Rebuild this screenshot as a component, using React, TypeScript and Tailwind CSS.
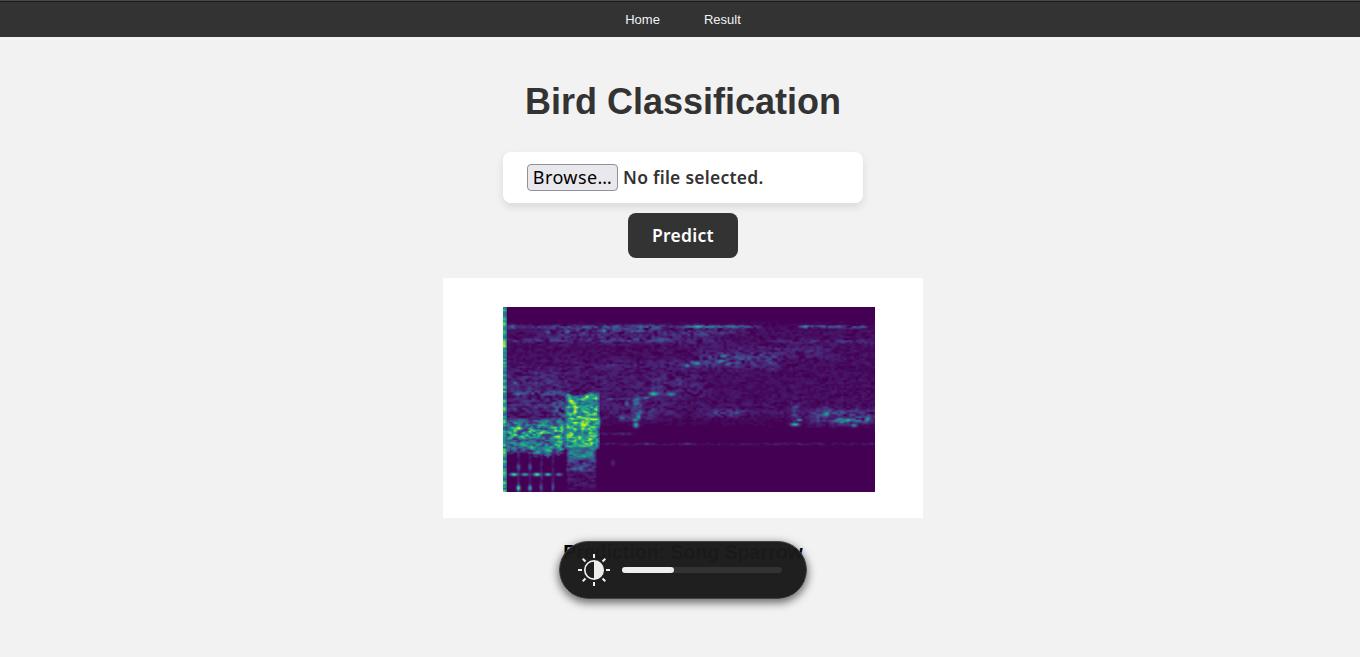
import React from "react";

const W = 372;
const H = 185;

const VIRIDIS: number[][] = [
  [68, 1, 84], [72, 26, 108], [71, 47, 125], [65, 68, 135], [57, 86, 140], [49, 104, 142],
  [42, 120, 142], [35, 136, 142], [31, 152, 139], [34, 168, 132], [53, 183, 121],
  [84, 197, 104], [122, 209, 81], [165, 219, 54], [210, 226, 27], [253, 231, 37],
];
const LEVELS = 46;

function levelColor(level: number): string {
  const t = (level / (LEVELS - 1)) * (VIRIDIS.length - 1);
  const i = Math.min(VIRIDIS.length - 2, Math.floor(t));
  const f = t - i;
  const c = VIRIDIS[i].map((v, k) => Math.round(v + (VIRIDIS[i + 1][k] - v) * f));
  return `rgb(${c.join(",")})`;
}

function hash(x: number, y: number, seed: number): number {
  let n = Math.imul(x, 374761393) ^ Math.imul(y, 668265263) ^ Math.imul(seed, 1274126177);
  n = Math.imul(n ^ (n >>> 13), 1103515245);
  n = Math.imul(n ^ (n >>> 15), 2246822519);
  return ((n ^ (n >>> 16)) >>> 0) / 4294967296;
}

function noise(x: number, y: number, sx: number, sy: number, seed: number): number {
  const gx = x / sx;
  const gy = y / sy;
  const x0 = Math.floor(gx);
  const y0 = Math.floor(gy);
  const fx = gx - x0;
  const fy = gy - y0;
  const top = hash(x0, y0, seed) * (1 - fx) + hash(x0 + 1, y0, seed) * fx;
  const bot = hash(x0, y0 + 1, seed) * (1 - fx) + hash(x0 + 1, y0 + 1, seed) * fx;
  return top * (1 - fy) + bot * fy;
}

function edge(v: number, a: number, b: number, soft: number): number {
  const s = Math.min((v - a) / soft + 0.5, (b - v) / soft + 0.5);
  return Math.max(0, Math.min(1, s));
}

// [x0, x1, y0, y1, strength, softX, softY]
const HAZE: number[][] = [
  [0, 372, 18, 108, 0.065, 2, 12],
  [0, 190, 60, 108, 0.05, 50, 20],
  [0, 60, 66, 112, 0.1, 20, 14],
  [0, 210, 18.5, 21, 0.25, 20, 3],
  [60, 160, 18, 26, 0.13, 15, 4],
  [40, 220, 21, 36, 0.11, 30, 6],
  [90, 165, 31, 35, 0.15, 20, 3],
  [0, 60, 32, 35, 0.12, 20, 3],
  [190, 256, 18.5, 21, 0.38, 10, 2],
  [298, 362, 18.5, 21, 0.46, 10, 2],
  [180, 240, 18, 28, 0.1, 15, 5],
  [270, 372, 33, 36, 0.12, 15, 3],
  [196, 278, 43, 60, 0.2, 22, 12],
  [270, 330, 40, 50, 0.1, 30, 9],
  [90, 200, 55, 62, 0.1, 50, 6],
  [0, 60, 85, 88, 0.24, 15, 3],
  [145, 200, 70, 88, 0.08, 20, 8],
  [308, 372, 102, 118, 0.2, 14, 8],
  [330, 360, 111, 115, 0.24, 8, 3],
  [208, 238, 103, 109, 0.26, 10, 5],
  [118, 150, 102, 114, 0.12, 12, 6],
  [50, 62, 95, 135, 0.3, 5, 6],
  [97, 130, 125.5, 128, 0.14, 6, 2],
  [100, 372, 136, 138, 0.1, 10, 2],
  [64, 93, 152, 164, 0.26, 3, 3],
  [64, 93, 160, 182, 0.1, 3, 6],
  [130, 138, 90, 112, 0.22, 4, 6],
  [98, 132, 91, 93, 0.12, 8, 2],
  [289, 296, 94, 114, 0.17, 4, 6],
];

// [x, y, radiusX, radiusY, strength]
const SPOTS: number[][] = [
  [11, 167.5, 3.4, 1.5, 0.8], [22, 167.5, 3.2, 1.4, 0.6], [34, 167.5, 3.4, 1.6, 0.85],
  [45, 167.5, 3, 1.4, 0.7], [56, 167.5, 2.8, 1.4, 0.45],
  [15.5, 181, 1.8, 2.6, 0.75], [27, 181, 1.8, 2.4, 0.55], [38, 180, 1.5, 3, 0.22], [50, 180, 1.5, 3, 0.2],
  [15.5, 160, 1.8, 3, 0.2], [27, 160, 1.8, 3, 0.2],
  [150, 87, 3.2, 2, 0.6], [155, 86.5, 3, 1.5, 0.25], [168, 87.5, 4.5, 1.6, 0.38], [143, 91, 3, 1.2, 0.3],
  [124, 96, 2, 3, 0.24], [133, 97, 3, 2, 0.24], [133, 92, 3, 1.4, 0.2],
  [133, 118, 2.5, 2.4, 0.62], [136, 110, 2.2, 2.2, 0.38], [132, 113, 2.4, 1.6, 0.38], [119, 111, 3, 2, 0.25],
  [292, 117.5, 3.8, 1.6, 0.64], [296.5, 113, 2.5, 1.3, 0.5],
  [324, 106.5, 3, 2, 0.32], [321, 108, 2, 1.5, 0.2], [346, 113.2, 5, 1.3, 0.3], [339, 115, 2.5, 1.4, 0.26],
  [351, 118.5, 2.5, 1.6, 0.38], [364.5, 112.5, 2.4, 2.3, 0.38],
  [194, 56.5, 3.6, 1.7, 0.42], [189, 55, 2, 1.4, 0.25], [218, 54, 3, 1.7, 0.32],
  [225, 57.5, 3, 1.5, 0.32], [184, 58.5, 2, 1.6, 0.28], [221, 49, 3, 1.2, 0.25], [207, 50, 2, 1.5, 0.22],
  [230, 19.5, 3, 1.5, 0.28], [192, 19.5, 3, 1.5, 0.12], [302, 19.5, 3, 1.5, 0.12],
  [101, 23, 2, 2, 0.35], [10, 20, 3, 2, 0.25], [65, 25, 2, 1.6, 0.25], [45, 25, 2, 1.6, 0.2],
  [12, 76, 2, 1.5, 0.3], [15, 87, 2, 1.5, 0.25], [185, 59, 2, 1.5, 0.1], [110, 156, 1.8, 3, 0.1],
  [144, 137, 3, 1.2, 0.1], [184, 137, 4, 1.2, 0.1], [96, 115, 1.6, 4, 0.42],
];

function intensity(x: number, y: number): number {
  if (x < 4) {
    const n = noise(0, y, 3, 1.8, 9);
    const base = 0.25 + n * 0.58 + (y > 28 && y < 45 ? 0.15 : 0);
    return Math.min(1, base * (x < 2 ? 1 : x < 3 ? 0.85 : 0.6));
  }
  const fine = noise(x, y, 3, 2, 1) * 0.6 + noise(x, y, 6, 2, 2) * 0.4;
  const grain = Math.max(0, (fine - 0.22) * 1.7);
  let v = 0;
  for (const [x0, x1, y0, y1, s, sx, sy] of HAZE) {
    const w = edge(x, x0, x1, sx) * edge(y, y0, y1, sy);
    if (w > 0) v += w * s * grain;
  }
  v += 0.04 * grain * edge(x, 97, 372, 2) * edge(y, 100, 118, 10);
  const strand = noise(x, y, 4, 2, 5) * 0.65 + noise(x, y, 2.4, 1.5, 6) * 0.35;
  const bottom = 143 + noise(x, 0, 5, 1, 12) * 7 - (x > 22 && x < 30 ? 2 : 0);
  const low = edge(x, 2, 61, 4) * edge(y, 113, bottom, 6);
  if (low > 0) v += low * Math.max(0.14, (strand - 0.17) * 1.25) * (y > 120 && y < 132 ? 1.05 : 0.82);
  const block = edge(x, 62 + noise(0, y, 1, 4, 13) * 2, 95.5, 4) * edge(y, 86 + noise(x, 0, 5, 1, 14) * 4, 141, 4);
  if (block > 0) v = v * (1 - block) + block * Math.max(0.28, 0.07 + strand * 1.1);
  const tail = edge(x, 65, 92, 4) * edge(y, 140, 152, 4);
  if (tail > 0) v = v * (1 - tail) + tail * (0.15 + strand * 0.5);
  if (y > 145) {
    for (const cx of [15.5, 27, 38.5, 50]) {
      v += 0.1 * Math.max(0, 1 - Math.abs(x - cx) / 2.4) * (0.2 + grain);
    }
  }
  for (const [cx, cy, rx, ry, s] of SPOTS) {
    const d = ((x - cx) / rx) ** 2 + ((y - cy) / ry) ** 2;
    if (d < 6) v += s * Math.exp(-d);
  }
  return Math.min(0.93, v);
}

function buildPaths(): string[] {
  const paths: string[] = Array(LEVELS).fill("");
  for (let y = 0; y < H; y++) {
    let start = 0;
    let current = -1;
    for (let x = 0; x <= W; x++) {
      const level = x < W ? Math.round(intensity(x + 0.5, y + 0.5) * (LEVELS - 1)) : -2;
      if (level !== current) {
        if (current > 0) paths[current] += `M${start} ${y}h${x - start}v1H${start}z`;
        start = x;
        current = level;
      }
    }
  }
  return paths;
}

const PATHS = buildPaths();

function Spectrogram() {
  return (
    <svg width={W} height={H} viewBox={`0 0 ${W} ${H}`} shapeRendering="crispEdges" className="block" role="img">
      <rect width={W} height={H} fill="#440154" />
      {PATHS.map((d, i) => (d ? <path key={i} d={d} fill={levelColor(i)} /> : null))}
    </svg>
  );
}

function BrightnessIcon() {
  return (
    <svg width="32" height="32" viewBox="0 0 32 32" fill="none" stroke="#eeeeec" strokeWidth="2" className="shrink-0">
      <circle cx="16" cy="16" r="9.2" strokeWidth="1.7" />
      <path d="M16 6.8a9.2 9.2 0 0 1 0 18.4z" fill="#eeeeec" stroke="none" />
      <path d="M16 0v4M16 28v4M0 16h4M28 16h4M4.7 4.7l2.8 2.8M24.5 24.5l2.8 2.8M4.7 27.3l2.8-2.8M24.5 7.5l2.8-2.8" />
    </svg>
  );
}

export default function App() {
  return (
    <div className="relative flex h-[657px] flex-col items-center overflow-hidden bg-[#f2f2f2] pl-[6px] font-['Liberation_Sans',Arial,sans-serif] text-[#333]">
      <nav className="-ml-[6px] flex h-[37px] w-[1360px] shrink-0 justify-center gap-11 border-t border-[#484a48] bg-[#333] pt-px pl-[6px] text-[13px] leading-[36px] text-[#f2f2f2] shadow-[inset_0_1px_0_#191a19]">
        <a>Home</a>
        <a>Result</a>
      </nav>
      <h1 className="mt-11 text-[36px] leading-[41px] font-bold">Bird Classification</h1>
      <div className="mt-[30px] flex h-[51px] w-[360px] shrink-0 items-center rounded-lg bg-white px-6 font-['Noto_Sans','Open_Sans',sans-serif] shadow-[0_4px_8px_rgba(0,0,0,0.1)]">
        <button className="flex h-[27px] w-[91px] shrink-0 items-center justify-center rounded-[4px] border border-[#8f8f9d] bg-[#e9e9ed] pb-0.5 text-[18px] leading-none tracking-[0.4px] text-black">
          Browse…
        </button>
        <span className="ml-[5px] text-[17.5px] font-semibold tracking-[0.25px] whitespace-nowrap">No file selected.</span>
      </div>
      <button className="mt-[10px] h-[45px] w-[110px] shrink-0 rounded-lg bg-[#333] font-['Noto_Sans','Open_Sans',sans-serif] text-[17.5px] font-semibold tracking-[0.25px] text-white">
        Predict
      </button>
      <div className="mt-5 h-[240px] w-[480px] shrink-0 bg-white pt-[29px] pl-[60px]">
        <Spectrogram />
      </div>
      <p className="mt-[22px] text-[19.5px] leading-6 font-bold text-black">Prediction: Song Sparrow</p>
      <div className="absolute top-[541px] left-[559px] flex h-[58px] w-[248px] items-center rounded-full border border-[#444] bg-[#1b1b1b]/[.98] pl-[18px] shadow-[0_3px_8px_1px_rgba(0,0,0,0.55)]">
        <BrightnessIcon />
        <div className="ml-3 h-[6px] w-40 rounded-full bg-[#323232]">
          <div className="h-[6px] w-[52px] rounded-full bg-[#eeeeec]" />
        </div>
      </div>
    </div>
  );
}
